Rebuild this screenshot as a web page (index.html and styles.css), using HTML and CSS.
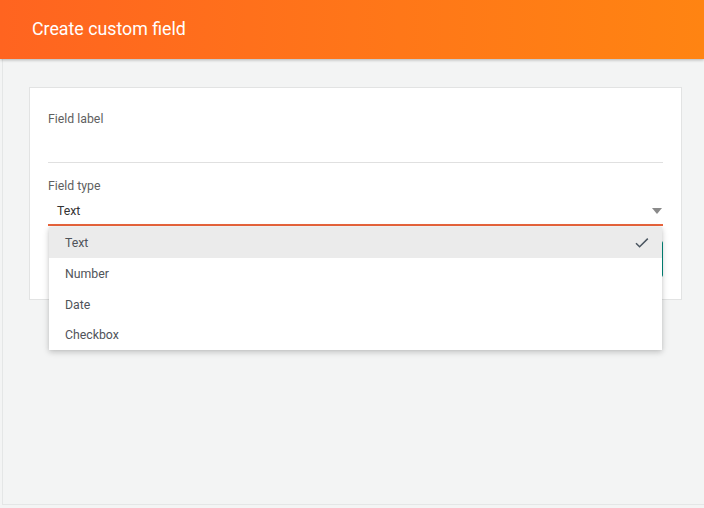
FILE: index.html
```html
<!DOCTYPE html>
<html>
<head>
<meta charset="utf-8">
<link rel="stylesheet" href="styles.css">
</head>
<body>
<header class="topbar">
  <h1 class="title">Create custom field</h1>
</header>
<main class="page">
  <section class="card">
    <div class="label">Field label</div>
    <div class="input"></div>
    <div class="label label-type">Field type</div>
    <div class="select">
      <span class="select-value">Text</span>
      <span class="arrow"></span>
      <ul class="menu">
        <li class="item selected"><span>Text</span>
          <svg class="check" width="14" height="12" viewBox="0 0 14 12"><path d="M1 6.2 L4.6 9.8 L12.8 1.6" fill="none" stroke="#4a5560" stroke-width="1.5"/></svg>
        </li>
        <li class="item">Number</li>
        <li class="item">Date</li>
        <li class="item">Checkbox</li>
      </ul>
    </div>
    <div class="actions">
      <button class="btn">Create</button>
    </div>
  </section>
</main>
</body>
</html>
```
FILE: styles.css
```css
html, body {
  margin: 0;
  padding: 0;
  overflow: hidden;
  background: #f3f4f4;
  font-family: Roboto, "Liberation Sans", sans-serif;
}
.topbar {
  height: 59px;
  background: linear-gradient(90deg, #ff6420 0%, #ff7519 50%, #ff8412 100%);
  box-shadow: 0 1px 3px rgba(0,0,0,0.28);
  display: flex;
  align-items: center;
  padding-left: 32px;
  position: relative;
  z-index: 2;
}
.title {
  margin: 0;
  font-size: 17.8px;
  font-weight: 400;
  color: #fff;
  line-height: 24px;
  padding-bottom: 2px;
}
.page {
  margin-left: 2px;
  height: 446px;
  border-left: 1px solid #e4e6e6;
  border-bottom: 1px solid #e4e6e6;
  padding: 28px 0 0 26px;
  box-sizing: border-box;
}
.card {
  width: 653px;
  box-sizing: border-box;
  background: #fff;
  border: 1px solid #e2e3e3;
  padding: 23px 18px 22px 18px;
}
.label {
  font-size: 12.3px;
  line-height: 16px;
  color: #5f5f5f;
}
.input {
  height: 35px;
  border-bottom: 1px solid #e0e0e0;
}
.label-type {
  margin-top: 15px;
}
.select {
  position: relative;
  padding: 9px 0 5px 9px;
  border-bottom: 2px solid #e8643c;
  display: flex;
  align-items: center;
  justify-content: space-between;
}
.select-value {
  font-size: 12.3px;
  line-height: 16px;
  color: #333;
}
.arrow {
  width: 0;
  height: 0;
  border-left: 5.5px solid transparent;
  border-right: 5.5px solid transparent;
  border-top: 6px solid #8a8a8a;
  margin-right: 1px;
  margin-bottom: 1px;
}
.menu {
  position: absolute;
  top: calc(100% + 3px);
  left: 1px;
  right: 1px;
  margin: 0;
  padding: 0;
  list-style: none;
  background: #fff;
  box-shadow: 0 2px 6px rgba(0,0,0,0.22), 0 0 2px rgba(0,0,0,0.06);
  z-index: 5;
}
.item {
  height: 31px;
  padding: 0 13px 0 16px;
  display: flex;
  align-items: center;
  justify-content: space-between;
  font-size: 12.3px;
  color: #4f5359;
}
.item:last-child {
  height: 30px;
}
.selected {
  background: #ebebeb;
}
.check {
  display: block;
}
.actions {
  display: flex;
  justify-content: flex-end;
  margin-top: 15px;
}
.btn {
  height: 36px;
  width: 90px;
  border: none;
  border-radius: 2px;
  background: #00897b;
  color: #fff;
  font-family: Roboto, "Liberation Sans", sans-serif;
  font-size: 13px;
}
```
